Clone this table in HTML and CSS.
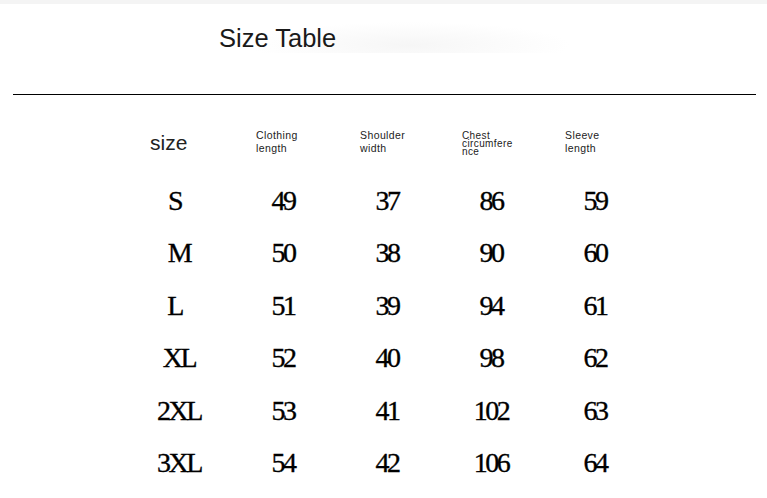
FILE: index.html
```html
<!DOCTYPE html>
<html lang="en">
<head>
<meta charset="utf-8">
<title>Size Table</title>
<link rel="stylesheet" href="styles.css">
</head>
<body>
<div class="topbar"></div>
<div class="title-row">
  <h1 class="title">Size Table</h1>
</div>
<div class="rule"></div>
<div class="table">
  <div class="head">
    <div class="hcell hsize">size</div>
    <div class="hcell hsmall">Clothing<br>length</div>
    <div class="hcell hsmall">Shoulder<br>width</div>
    <div class="hcell hchest">Chest<br>circumfere<br>nce</div>
    <div class="hcell hsmall hlast">Sleeve<br>length</div>
  </div>
  <div class="row"><span class="lean">S</span><span>49</span><span>37</span><span>86</span><span>59</span></div>
  <div class="row"><span>M</span><span>50</span><span>38</span><span>90</span><span>60</span></div>
  <div class="row"><span class="lean">L</span><span>51</span><span>39</span><span>94</span><span>61</span></div>
  <div class="row"><span>XL</span><span>52</span><span>40</span><span>98</span><span>62</span></div>
  <div class="row"><span>2XL</span><span>53</span><span>41</span><span>102</span><span>63</span></div>
  <div class="row"><span>3XL</span><span>54</span><span>42</span><span>106</span><span>64</span></div>
</div>
</body>
</html>
```
FILE: styles.css
```css
html, body {
  margin: 0;
  padding: 0;
  background: #ffffff;
}
body {
  width: 767px;
  height: 498px;
  overflow: hidden;
  font-family: "Liberation Sans", Arial, sans-serif;
  color: #111;
}
.topbar {
  height: 4px;
  background: #f4f4f4;
}
.title-row {
  padding: 19px 0 0 219px;
  height: 30px;
  background-image: radial-gradient(closest-side, #f6f6f6, rgba(255, 255, 255, 0));
  background-repeat: no-repeat;
  background-position: 250px 18px;
  background-size: 320px 46px;
}
.title {
  margin: 0;
  font-size: 25.5px;
  line-height: 30px;
  font-weight: normal;
  color: #1a1a1a;
}
.rule {
  height: 1px;
  background: #000;
  margin: 41px 11px 0 13px;
}
.table {
  margin-left: 127px;
  width: 520px;
}
.head {
  display: grid;
  grid-template-columns: repeat(5, 104px);
  height: 80px;
  align-items: start;
}
.hcell {
  color: #222;
}
.hsize {
  padding: 36px 0 0 23px;
  font-size: 21px;
  line-height: 24px;
}
.hsmall {
  padding: 34px 0 0 25px;
  font-size: 10.5px;
  line-height: 13px;
  letter-spacing: 0.4px;
}
.hlast {
  padding-left: 22px;
}
.hchest {
  padding: 37px 0 0 23px;
  font-size: 10px;
  line-height: 8px;
  letter-spacing: 0.4px;
}
.row {
  display: grid;
  grid-template-columns: repeat(5, 104px);
  height: 52.4px;
  line-height: 52.4px;
  font-family: "Liberation Serif", "Times New Roman", serif;
  font-size: 28px;
  letter-spacing: -2.5px;
  color: #000;
  text-align: center;
  -webkit-text-stroke: 0.35px #000;
}
.row .lean {
  padding-right: 9px;
}
```
